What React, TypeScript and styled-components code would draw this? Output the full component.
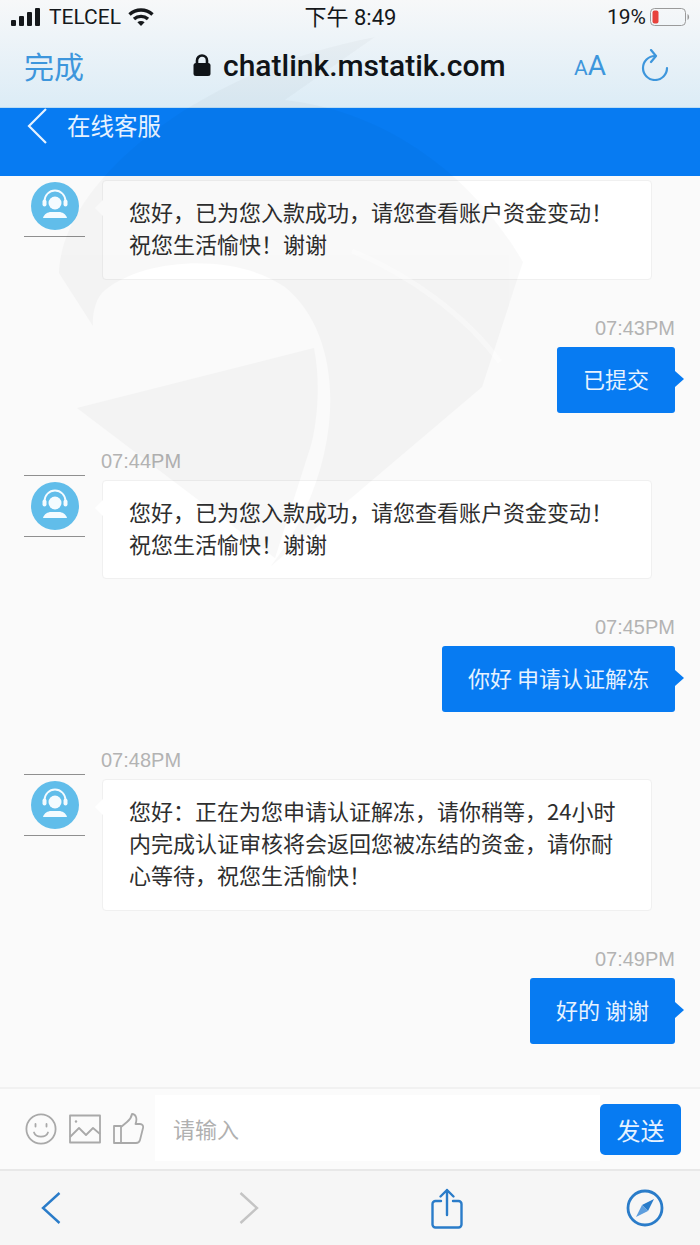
import React from "react";
import styled, { createGlobalStyle } from "styled-components";

const CJK = `"Noto Sans CJK SC", "Liberation Sans", sans-serif`;

const Global = createGlobalStyle`
  html, body { margin: 0; padding: 0; }
  body { font-family: ${CJK}; background: #fafafa; }
`;

const Page = styled.div`
  position: relative;
  width: 700px;
  height: 1245px;
  display: flex;
  flex-direction: column;
  overflow: hidden;
  background: #fafafa;
`;

const BrowserTop = styled.div`
  height: 108px;
  flex: none;
  box-sizing: border-box;
  background: linear-gradient(#f7f8f9, #dcecf6);
  border-bottom: 1px solid #b9dcf5;
`;

const StatusBar = styled.div`
  height: 35px;
  box-sizing: border-box;
  display: grid;
  grid-template-columns: 1fr auto 1fr;
  align-items: center;
  padding: 0 10px 1px 11px;
  color: #15181b;
  font-size: 21px;
  line-height: 1;
`;

const StatusLeft = styled.div`
  display: flex;
  align-items: center;
  gap: 7px;
  font-family: "Roboto", sans-serif;
`;

const StatusRight = styled.div`
  display: flex;
  align-items: center;
  justify-content: flex-end;
  gap: 4px;
  font-family: "Roboto", sans-serif;
`;

const Clock = styled.div`
  font-family: "Roboto", ${CJK};
  font-size: 22px;
  line-height: 26px;
  height: 24px;
  overflow: visible;
`;

const AddressRow = styled.div`
  height: 72px;
  box-sizing: border-box;
  display: flex;
  align-items: center;
  padding: 0 31px 12px 24px;
`;

const DoneLabel = styled.div`
  color: #3d96dc;
  font-size: 30px;
  line-height: 1;
  width: 169px;
`;

const Url = styled.div`
  flex: 1;
  display: flex;
  align-items: center;
  gap: 12px;
  color: #101418;
  font-family: "Roboto", sans-serif;
  font-weight: 500;
  font-size: 30px;
`;

const TextSize = styled.div`
  color: #3d96dc;
  font-family: "Roboto", sans-serif;
  margin-right: 35px;
  display: flex;
  align-items: baseline;
`;

const SmallA = styled.span`
  font-size: 21px;
`;

const BigA = styled.span`
  font-size: 28px;
`;

const Header = styled.div`
  height: 68px;
  flex: none;
  background: #077bf2;
  display: flex;
  align-items: flex-start;
  gap: 20px;
  padding-left: 27px;
  color: #e6f2ff;
  font-size: 23.5px;
`;

const Title = styled.div`
  line-height: 34px;
`;

const List = styled.div`
  height: 911px;
  flex: none;
  overflow: hidden;
  display: flex;
  flex-direction: column;
  box-sizing: border-box;
  padding: 4px 25px 0 24px;
`;

const LeftRow = styled.div<{ $first?: boolean }>`
  display: flex;
  flex: none;
  margin-top: ${(p) => (p.$first ? "0" : "38px")};
`;

const RightRow = styled.div`
  display: flex;
  flex: none;
  flex-direction: column;
  align-items: flex-end;
  margin-top: 38px;
`;

const Avatar = styled.div<{ $first?: boolean }>`
  width: 61px;
  height: 62px;
  flex: none;
  box-sizing: border-box;
  margin-top: ${(p) => (p.$first ? "-5px" : "24px")};
  border-top: 1px solid #8f8f8f;
  border-bottom: 1px solid #8f8f8f;
  display: flex;
  align-items: center;
  justify-content: center;
`;

const Body = styled.div`
  margin-left: 17px;
  width: 550px;
`;

const Time = styled.div`
  font-family: "Liberation Sans", sans-serif;
  font-size: 20px;
  line-height: 20px;
  color: #b3b3b3;
  margin-bottom: 9px;
`;

const LeftTime = styled(Time)`
  margin-left: -1px;
`;

const Bubble = styled.div`
  position: relative;
  box-sizing: border-box;
  padding: 14px 26px 19.5px;
  font-size: 22px;
  line-height: 32px;
  border-radius: 4px;
  color: #2e2e2e;
  background: #fff;
  border: 1px solid #f0f0f0;
  &::before {
    content: "";
    position: absolute;
    top: 19px;
    left: -8px;
    border-right: 8px solid #fff;
    border-top: 8px solid transparent;
    border-bottom: 8px solid transparent;
  }
`;

const OutBubble = styled.div`
  position: relative;
  padding: 15px 26px 19px;
  font-size: 22px;
  line-height: 32px;
  border-radius: 3px;
  color: #e6f2ff;
  background: #077bf2;
  &::after {
    content: "";
    position: absolute;
    top: 24px;
    right: -9px;
    border-left: 9px solid #077bf2;
    border-top: 8px solid transparent;
    border-bottom: 8px solid transparent;
  }
`;

const InputBar = styled.div`
  height: 84px;
  flex: none;
  box-sizing: border-box;
  display: flex;
  align-items: center;
  background: #fbfbfb;
  border-top: 2px solid #f1f1f1;
  border-bottom: 2px solid #e8e8e8;
  padding: 0 19px 0 25px;
`;

const Tools = styled.div`
  display: flex;
  align-items: center;
  gap: 12px;
  width: 130px;
  flex: none;
`;

const Field = styled.div`
  flex: 1;
  align-self: stretch;
  margin: 6px 0 8px;
  background: #fff;
  color: #b0b0b0;
  font-size: 22px;
  display: flex;
  align-items: center;
  padding-left: 18px;
`;

const SendButton = styled.button`
  width: 81px;
  height: 51px;
  border: 0;
  padding: 0;
  border-radius: 5px;
  background: #077bf2;
  color: #e6f2ff;
  font-family: ${CJK};
  font-size: 24px;
`;

const BottomBar = styled.div`
  flex: 1;
  display: flex;
  align-items: center;
  justify-content: space-between;
  background: #f6f6f6;
  padding: 0 33px 0 29px;
`;

const NavSlot = styled.div`
  width: 44px;
  display: flex;
  justify-content: center;
`;

const Watermark = styled.svg`
  position: absolute;
  left: 0;
  top: 0;
  pointer-events: none;
`;

const Signal = () => (
  <svg width="31" height="18" viewBox="0 0 31 18" fill="#15181b">
    <rect x="0" y="12" width="5" height="6" rx="1" />
    <rect x="8" y="8" width="5" height="10" rx="1" />
    <rect x="16" y="4" width="5" height="14" rx="1" />
    <rect x="24" y="0" width="5" height="18" rx="1" />
  </svg>
);

const Wifi = () => (
  <svg width="26" height="20" viewBox="0 0 26 20" fill="none" stroke="#15181b" strokeWidth="3.4">
    <path d="M1.5 7.5C8 1.5 18 1.5 24.5 7.5" />
    <path d="M6 12C10 8.5 16 8.5 20 12" />
    <path d="M13 19l-3.6-3.8c2-1.6 5.2-1.6 7.2 0z" fill="#15181b" stroke="none" />
  </svg>
);

const Battery = () => (
  <svg width="40" height="20" viewBox="0 0 40 20" fill="none">
    <rect x="0.5" y="1.5" width="35" height="17" rx="4" stroke="#9a9a9a" />
    <rect x="2.5" y="3.5" width="6" height="13" rx="2" fill="#e8423c" />
    <path d="M37.5 7v6c1-.5 1.6-1.6 1.6-3s-.6-2.5-1.6-3z" fill="#9a9a9a" />
  </svg>
);

const LockIcon = () => (
  <svg width="18" height="22" viewBox="0 0 18 22">
    <path d="M4 10V6.5a5 5 0 0 1 10 0V10" fill="none" stroke="#101418" strokeWidth="2.6" />
    <rect x="0.5" y="9" width="17" height="13" rx="2.5" fill="#101418" />
  </svg>
);

const ReloadIcon = () => (
  <svg width="28" height="32" viewBox="0 0 28 32" fill="none" stroke="#3d96dc" strokeWidth="2.2" strokeLinecap="round" strokeLinejoin="round">
    <path d="M14 7A12 12 0 1 0 26 19" />
    <path d="M10 1l5 6-5 6" />
  </svg>
);

const HeaderBack = () => (
  <svg width="20" height="36" viewBox="0 0 20 36" fill="none" stroke="#e6f2ff" strokeWidth="2.2">
    <path d="M19 1L2 18l17 17" />
  </svg>
);

const AgentAvatar = () => (
  <svg width="48" height="48" viewBox="0 0 48 48">
    <circle cx="24" cy="24" r="24" fill="#61bdea" />
    <path d="M13.5 22v-3a10.5 10.5 0 0 1 21 0v3" fill="none" stroke="#f4fbff" strokeWidth="1.8" />
    <circle cx="24" cy="21" r="6.5" fill="#f4fbff" />
    <rect x="11.5" y="17.5" width="4" height="7" rx="2" fill="#f4fbff" />
    <rect x="32.5" y="17.5" width="4" height="7" rx="2" fill="#f4fbff" />
    <path d="M12 36c1-4 5-6 8-6h8c3 0 7 2 8 6z" fill="#f4fbff" />
  </svg>
);

const SmileIcon = () => (
  <svg width="32" height="32" viewBox="0 0 32 32" fill="none" stroke="#a9a9a9" strokeWidth="1.8" strokeLinecap="round">
    <circle cx="16" cy="16" r="14.6" />
    <path d="M10.5 11v2.5M21.5 11v2.5" />
    <path d="M9 19.5c2 5.5 12 5.5 14 0" />
  </svg>
);

const PictureIcon = () => (
  <svg width="32" height="30" viewBox="0 0 32 30" fill="none" stroke="#a9a9a9" strokeWidth="1.8" strokeLinejoin="round">
    <rect x="1" y="1.5" width="30" height="27" />
    <circle cx="7" cy="7.5" r="1.2" fill="#a9a9a9" stroke="none" />
    <path d="M1 23l9-9 7 7 7-7 7 6" />
  </svg>
);

const ThumbIcon = () => (
  <svg width="31" height="32" viewBox="0 0 31 32" fill="none" stroke="#a9a9a9" strokeWidth="1.8" strokeLinejoin="round">
    <rect x="1" y="13" width="7" height="17" />
    <path d="M8 14l6-5c3-2.5 4.500-5 5-8 4 0 5.500 4.500 3.500 10H27c2.500 0 3.500 2 3 4l-3 12c-.5 2-2 3-4 3H8" />
  </svg>
);

const BackIcon = ({ color }: { color: string }) => (
  <svg width="20" height="32" viewBox="0 0 20 32" fill="none" stroke={color} strokeWidth="2.4">
    <path d="M18.500 1L2 16l16.500 15" />
  </svg>
);

const ForwardIcon = ({ color }: { color: string }) => (
  <svg width="20" height="32" viewBox="0 0 20 32" fill="none" stroke={color} strokeWidth="2.4">
    <path d="M1.500 1L18 16 1.500 31" />
  </svg>
);

const ShareIcon = () => (
  <svg width="32" height="41" viewBox="0 0 32 41" fill="none" stroke="#2a7cc9" strokeWidth="2.4" strokeLinecap="round" strokeLinejoin="round">
    <path d="M10 13H4.500a3 3 0 0 0-3 3v20.500a3 3 0 0 0 3 3h23a3 3 0 0 0 3-3V16a3 3 0 0 0-3-3H22" />
    <path d="M16 27V2M9.500 8.500L16 2l6.500 6.500" />
  </svg>
);

const CompassIcon = () => (
  <svg width="38" height="38" viewBox="0 0 38 38">
    <circle cx="19" cy="19" r="17" fill="none" stroke="#2a7cc9" strokeWidth="2.8" />
    <path d="M28 10L22 22 16 16z" fill="#2a7cc9" />
    <path d="M10 28l6-12 6 6z" fill="#5d9ede" />
  </svg>
);

const thanks = ["您好，已为您入款成功，请您查看账户资金变动！", "祝您生活愉快！谢谢"];

type Msg =
  | { side: "in"; time?: string; lines: string[] }
  | { side: "out"; time: string; text: string };

const messages: Msg[] = [
  { side: "in", lines: thanks },
  { side: "out", time: "07:43PM", text: "已提交" },
  { side: "in", time: "07:44PM", lines: thanks },
  { side: "out", time: "07:45PM", text: "你好 申请认证解冻" },
  {
    side: "in",
    time: "07:48PM",
    lines: ["您好：正在为您申请认证解冻，请你稍等，24小时", "内完成认证审核将会返回您被冻结的资金，请你耐", "心等待，祝您生活愉快！"],
  },
  { side: "out", time: "07:49PM", text: "好的 谢谢" },
];

export default function App() {
  return (
    <Page>
      <Global />
      <BrowserTop>
        <StatusBar>
          <StatusLeft>
            <Signal />
            <span>TELCEL</span>
            <Wifi />
          </StatusLeft>
          <Clock>下午 8:49</Clock>
          <StatusRight>
            <span>19%</span>
            <Battery />
          </StatusRight>
        </StatusBar>
        <AddressRow>
          <DoneLabel>完成</DoneLabel>
          <Url>
            <LockIcon />
            chatlink.mstatik.com
          </Url>
          <TextSize>
            <SmallA>A</SmallA>
            <BigA>A</BigA>
          </TextSize>
          <ReloadIcon />
        </AddressRow>
      </BrowserTop>
      <Header>
        <HeaderBack />
        <Title>在线客服</Title>
      </Header>
      <List>
        {messages.map((m, i) =>
          m.side === "in" ? (
            <LeftRow key={i} $first={!m.time}>
              <Avatar $first={!m.time}>
                <AgentAvatar />
              </Avatar>
              <Body>
                {m.time && <LeftTime>{m.time}</LeftTime>}
                <Bubble>
                  {m.lines.map((l) => (
                    <div key={l}>{l}</div>
                  ))}
                </Bubble>
              </Body>
            </LeftRow>
          ) : (
            <RightRow key={i}>
              <Time>{m.time}</Time>
              <OutBubble>{m.text}</OutBubble>
            </RightRow>
          )
        )}
      </List>
      <InputBar>
        <Tools>
          <SmileIcon />
          <PictureIcon />
          <ThumbIcon />
        </Tools>
        <Field>请输入</Field>
        <SendButton>发送</SendButton>
      </InputBar>
      <BottomBar>
        <NavSlot>
          <BackIcon color="#2a7cc9" />
        </NavSlot>
        <NavSlot>
          <ForwardIcon color="#c4c4c4" />
        </NavSlot>
        <NavSlot>
          <ShareIcon />
        </NavSlot>
        <NavSlot>
          <CompassIcon />
        </NavSlot>
      </BottomBar>
      <Watermark width="700" height="700" viewBox="0 0 700 700">
        <g fill="#000" opacity="0.022">
          <path d="M59 273C62 180 200 70 375 37L285 100C380 110 470 170 523 262L482 387L271 566C345 470 350 340 285 287C240 255 150 255 105 290C95 298 92 315 93 326Z" />
          <path d="M77 408L314 348C322 390 315 430 311 445L275 558Z" />
        </g>
        <path d="M352 251C410 275 465 315 500 362" fill="none" stroke="#fff" strokeOpacity="0.35" strokeWidth="5" />
      </Watermark>
    </Page>
  );
}
